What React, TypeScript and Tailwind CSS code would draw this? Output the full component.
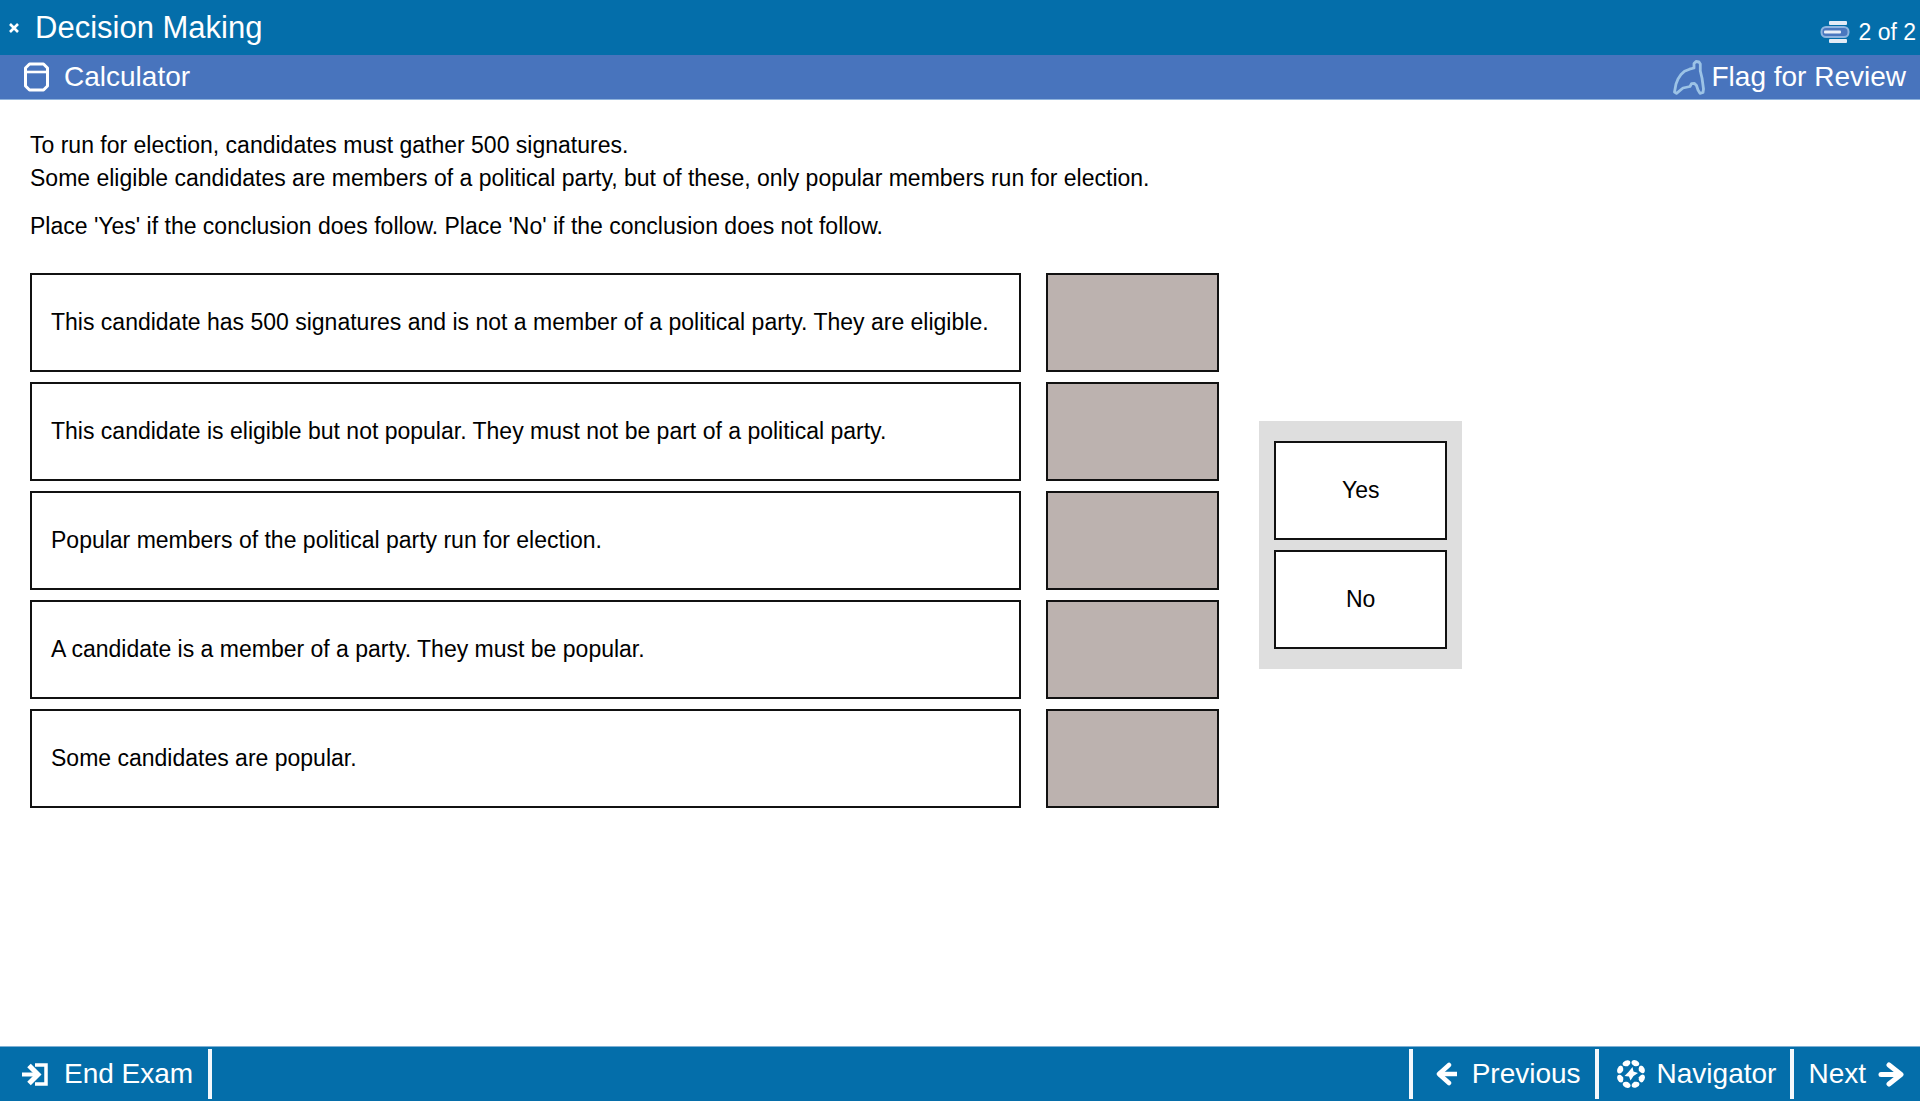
import { ReactNode, useState } from 'react';

type Answer = 'Yes' | 'No';

const statements = [
  'This candidate has 500 signatures and is not a member of a political party. They are eligible.',
  'This candidate is eligible but not popular. They must not be part of a political party.',
  'Popular members of the political party run for election.',
  'A candidate is a member of a party. They must be popular.',
  'Some candidates are popular.',
];

const answers: Answer[] = ['Yes', 'No'];

const CloseIcon = () => (
  <svg width="10" height="10" viewBox="0 0 10 10" fill="none" stroke="#fff" strokeWidth="2.6">
    <path d="M1 1l8 8M9 1L1 9" />
  </svg>
);

const CalculatorIcon = () => (
  <svg width="25" height="30" viewBox="0 0 25 30" fill="none" stroke="#fff" strokeWidth="3">
    <path d="M5.5 2h14l4 4v18l-4 4h-14l-4-4V6z" strokeLinejoin="round" />
    <path d="M2 10h21" strokeWidth="2.6" />
  </svg>
);

const FlagIcon = () => (
  <svg width="32" height="35" viewBox="0 0 32 35" fill="none" stroke="#9cc3e6" strokeWidth="2.8">
    <path
      d="M21 8V3.5L23 1.500l3 .5 1.300 2V11L29 18l1.500 11-.5 3.500-3 .8L25 30l-1.500-4.500-2-2-3 .2L17 26.500l-7 1.500-6.500 5.300-2-1.300L3 24l2-5 3-4.500 3.500-3.300 5-2z"
      strokeLinejoin="round"
    />
  </svg>
);

const PageIcon = () => (
  <svg width="30" height="24" viewBox="0 0 30 24" fill="none">
    <rect x="9" y="1" width="18" height="4" rx="1" fill="#e3ebf6" />
    <rect x="9" y="19" width="18" height="4" rx="1" fill="#e3ebf6" />
    <rect x="1.500" y="7" width="27" height="10" rx="4.500" fill="#4a77bf" stroke="#8db4df" strokeWidth="2" />
    <rect x="4" y="10.500" width="17" height="3" rx="1" fill="#e9eff8" />
  </svg>
);

const ExitIcon = () => (
  <svg width="26" height="23" viewBox="0 0 26 23" fill="none" stroke="#fff">
    <path d="M13 2h11v19H13" strokeWidth="3.500" />
    <path d="M0 11.500h15" strokeWidth="4" />
    <path d="M7 2.500l9 9-9 9" strokeWidth="5" />
  </svg>
);

const LeftArrow = () => (
  <svg width="23" height="24" viewBox="0 0 23 24" fill="none" stroke="#fff" strokeWidth="4.500">
    <path d="M3 12h19" />
    <path d="M14 3L4 12l10 9" strokeLinecap="round" strokeLinejoin="round" />
  </svg>
);

const RightArrow = () => (
  <svg width="26" height="25" viewBox="0 0 26 25" fill="none" stroke="#fff" strokeWidth="5">
    <path d="M3 12.500h19" strokeLinecap="round" />
    <path d="M11 3l12 9.500L11 22" strokeLinecap="round" strokeLinejoin="round" />
  </svg>
);

const NavigatorIcon = () => (
  <svg width="28" height="30" viewBox="-14 -15 28 30" fill="#fff">
    {[22, 67, 112, 157, 202, 247, 292, 337].map((angle) => (
      <path
        key={angle}
        d="M-4-12.500Q-3-14.500 0-14.500T4-12.500Q4.500-10 1.500-9L0-8.500-1.500-9Q-4.500-10-4-12.500z"
        transform={`rotate(${angle})`}
      />
    ))}
    <path d="M1.500-7L2.500-2.500 7-1 2.500 2 -.5 6.500-2 2.500-6.500 2-2.500-2z" />
  </svg>
);

const BarButton = ({ children, className }: { children: ReactNode; className: string }) => (
  <button type="button" className={`flex items-center whitespace-nowrap text-[28px] leading-8 text-white ${className}`}>
    {children}
  </button>
);

const Divider = () => <div className="h-[50px] w-1 bg-[#f4f8fc]" />;

export default function App() {
  const [selected, setSelected] = useState<Answer | null>(null);
  const [placed, setPlaced] = useState<Record<number, Answer>>({});

  function placeAnswer(index: number) {
    if (!selected) return;
    setPlaced({ ...placed, [index]: selected });
    setSelected(null);
  }

  return (
    <div className="flex min-h-screen flex-col bg-white font-['Liberation_Sans',Arial,sans-serif] text-black">
      <header>
        <div className="flex h-[55px] items-center justify-between bg-[#046eaa] pr-1 pl-[9px] text-white">
          <div className="flex items-center gap-4">
            <button type="button" aria-label="Close">
              <CloseIcon />
            </button>
            <h1 className="text-[31px] leading-8">Decision Making</h1>
          </div>
          <div className="flex items-center gap-2 pt-2">
            <PageIcon />
            <span className="text-[23px] leading-8">2 of 2</span>
          </div>
        </div>
        <div className="flex h-[45px] items-center justify-between border-b border-[#8fb3dc] bg-[#4874bd] pr-[14px] pl-6">
          <BarButton className="gap-[15px]">
            <CalculatorIcon />
            Calculator
          </BarButton>
          <BarButton className="gap-[6px]">
            <FlagIcon />
            Flag for Review
          </BarButton>
        </div>
      </header>

      <main className="flex-1 pt-[29px] pr-[calc(24%-3px)] pl-[30px] text-[23px] leading-[33px]">
        <p>
          To run for election, candidates must gather 500 signatures.
          <br />
          Some eligible candidates are members of a political party, but of these, only popular members run for
          election.
        </p>
        <p className="mt-[15px]">
          Place 'Yes' if the conclusion does follow. Place 'No' if the conclusion does not follow.
        </p>

        <div className="mt-[30px] flex items-start gap-10">
          <ul className="flex flex-1 flex-col gap-[10px]">
            {statements.map((statement, index) => (
              <li key={statement} className="flex gap-[25px]">
                <div className="flex min-h-[99px] flex-1 items-center border-2 border-[#111] px-[19px]">
                  {statement}
                </div>
                <button
                  type="button"
                  aria-label={`Answer ${index + 1}`}
                  onClick={() => placeAnswer(index)}
                  className="w-[173px] border-2 border-[#111] bg-[#bcb2af]"
                >
                  {placed[index]}
                </button>
              </li>
            ))}
          </ul>
          <div className="mt-[148px] flex flex-col gap-[10px] bg-[#dedede] px-[15px] py-5">
            {answers.map((answer) => (
              <button
                key={answer}
                type="button"
                aria-pressed={selected === answer}
                onClick={() => setSelected(answer)}
                className="h-[99px] w-[173px] border-2 border-[#111] bg-white"
              >
                {answer}
              </button>
            ))}
          </div>
        </div>
      </main>

      <footer className="flex h-[55px] items-center justify-between border-t border-[#7fb0d4] bg-[#046eaa]">
        <div className="flex items-center">
          <BarButton className="gap-4 pr-[15px] pl-[22px]">
            <ExitIcon />
            End Exam
          </BarButton>
          <Divider />
        </div>
        <nav className="flex items-center">
          <Divider />
          <BarButton className="gap-[14px] pr-[14px] pl-[22px]">
            <LeftArrow />
            Previous
          </BarButton>
          <Divider />
          <BarButton className="gap-3 pr-[14px] pl-[18px]">
            <NavigatorIcon />
            Navigator
          </BarButton>
          <Divider />
          <BarButton className="gap-3 pr-4 pl-[14px]">
            Next
            <RightArrow />
          </BarButton>
        </nav>
      </footer>
    </div>
  );
}
